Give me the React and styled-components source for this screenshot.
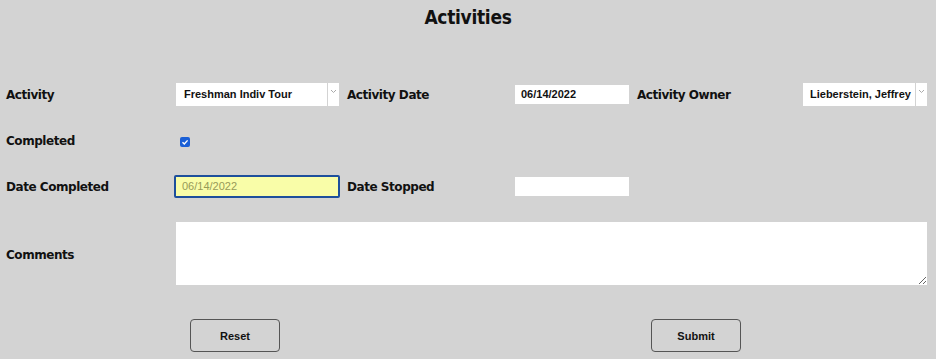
import React from "react";
import styled, { createGlobalStyle } from "styled-components";

const Global = createGlobalStyle`
  html, body { margin: 0; padding: 0; background: #d3d3d3; }
  body { font-family: "DejaVu Sans", "Liberation Sans", sans-serif; }
`

const Page = styled.div`
  width: 936px;
  height: 359px;
  background: #d3d3d3;
  overflow: hidden;
`
const Title = styled.h1`
  margin: 0;
  height: 82px;
  padding-top: 6px;
  box-sizing: border-box;
  text-align: center;
  font-family: "DejaVu Sans Condensed", "DejaVu Sans", sans-serif;
  font-size: 19px;
  font-weight: bold;
  color: #111;
  letter-spacing: -0.3px;
`
const FormGrid = styled.div`
  display: grid;
  grid-template-columns: 170px 171px 168px 122px 166px 1fr;
  grid-template-rows: 24px 24px 24px 64px;
  row-gap: 22px;
  align-items: center;
  padding-left: 6px;
  padding-right: 9px;
`
const Label = styled.div`
  font-size: 12px;
  font-weight: bold;
  color: #111;
  letter-spacing: -0.45px;
  padding-top: ${p => p.down || 2}px;
`
const SelectBox = styled.div`
  display: flex;
  height: 23px;
  width: ${p => p.w}px;
  background: #fff;
  box-sizing: border-box;
`
const SelectText = styled.div`
  flex: 1;
  display: flex;
  align-items: center;
  padding-left: ${p => p.pad || 8}px;
  font-family: "Liberation Sans", Arial, sans-serif;
  font-size: 11px;
  font-weight: bold;
  color: #111;
  white-space: nowrap;
  overflow: hidden;
`
const SelectArrow = styled.div`
  width: 12px;
  border-left: 1px solid #d3d3d3;
  display: flex;
  justify-content: center;
  padding-top: 6px;
  box-sizing: border-box;
`
const DateBox = styled.div`
  width: 114px;
  height: 19px;
  background: #fff;
  display: flex;
  align-items: center;
  padding-left: 6px;
  box-sizing: border-box;
  font-family: "Liberation Sans", Arial, sans-serif;
  font-size: 11px;
  font-weight: bold;
  color: #111;
`
const FocusDate = styled.div`
  width: 166px;
  height: 23px;
  margin-left: -2px;
  background: #f9fda8;
  border: 2px solid #1d4f9c;
  border-radius: 2px;
  box-sizing: border-box;
  display: flex;
  align-items: center;
  padding-left: 6px;
  font-family: "Liberation Sans", Arial, sans-serif;
  font-size: 11px;
  color: #979a58;
`
const Check = styled.span`
  display: inline-flex;
  align-items: center;
  justify-content: center;
  width: 10px;
  height: 10px;
  margin-left: 4px;
  margin-top: 2px;
  border-radius: 2px;
  background: #1a5fd6;
`
const Comments = styled.textarea`
  grid-column: 2 / 7;
  height: 63px;
  width: 100%;
  box-sizing: border-box;
  border: none;
  background: #fff;
  margin: 2px 0 0;
  padding: 0;
  resize: both;
  outline: none;
`
const ButtonRow = styled.div`
  display: flex;
  gap: 371px;
  padding-left: 190px;
  margin-top: 35px;
`
const Button = styled.button`
  width: 90px;
  height: 33px;
  background: #d3d3d3;
  border: 1px solid #555;
  border-radius: 4px;
  font-family: "Liberation Sans", Arial, sans-serif;
  font-size: 11px;
  font-weight: bold;
  color: #111;
`

const Chevron = () => (
  <svg width="7" height="5" viewBox="0 0 7 5">
    <path d="M1 1l2.5 2.5L6 1" fill="none" stroke="#aaa" strokeWidth="1" />
  </svg>
)

const App = () => {
  return (
    <Page>
      <Global />
      <Title>Activities</Title>
      <FormGrid>
        <Label>Activity</Label>
        <div>
          <SelectBox w={163}>
            <SelectText>Freshman Indiv Tour</SelectText>
            <SelectArrow><Chevron /></SelectArrow>
          </SelectBox>
        </div>
        <Label>Activity Date</Label>
        <DateBox>06/14/2022</DateBox>
        <Label>Activity Owner</Label>
        <div>
          <SelectBox w={124}>
            <SelectText pad={7}>Lieberstein, Jeffrey</SelectText>
            <SelectArrow><Chevron /></SelectArrow>
          </SelectBox>
        </div>

        <Label>Completed</Label>
        <div>
          <Check>
            <svg width="8" height="8" viewBox="0 0 8 8">
              <path d="M1.5 4.2l1.8 1.8L6.6 2.4" fill="none" stroke="#fff" strokeWidth="1.4" />
            </svg>
          </Check>
        </div>
        <div />
        <div />
        <div />
        <div />

        <Label>Date Completed</Label>
        <FocusDate>06/14/2022</FocusDate>
        <Label>Date Stopped</Label>
        <DateBox />
        <div />
        <div />

        <Label down={5}>Comments</Label>
        <Comments />
      </FormGrid>
      <ButtonRow>
        <Button>Reset</Button>
        <Button>Submit</Button>
      </ButtonRow>
    </Page>
  )
}

export default App
